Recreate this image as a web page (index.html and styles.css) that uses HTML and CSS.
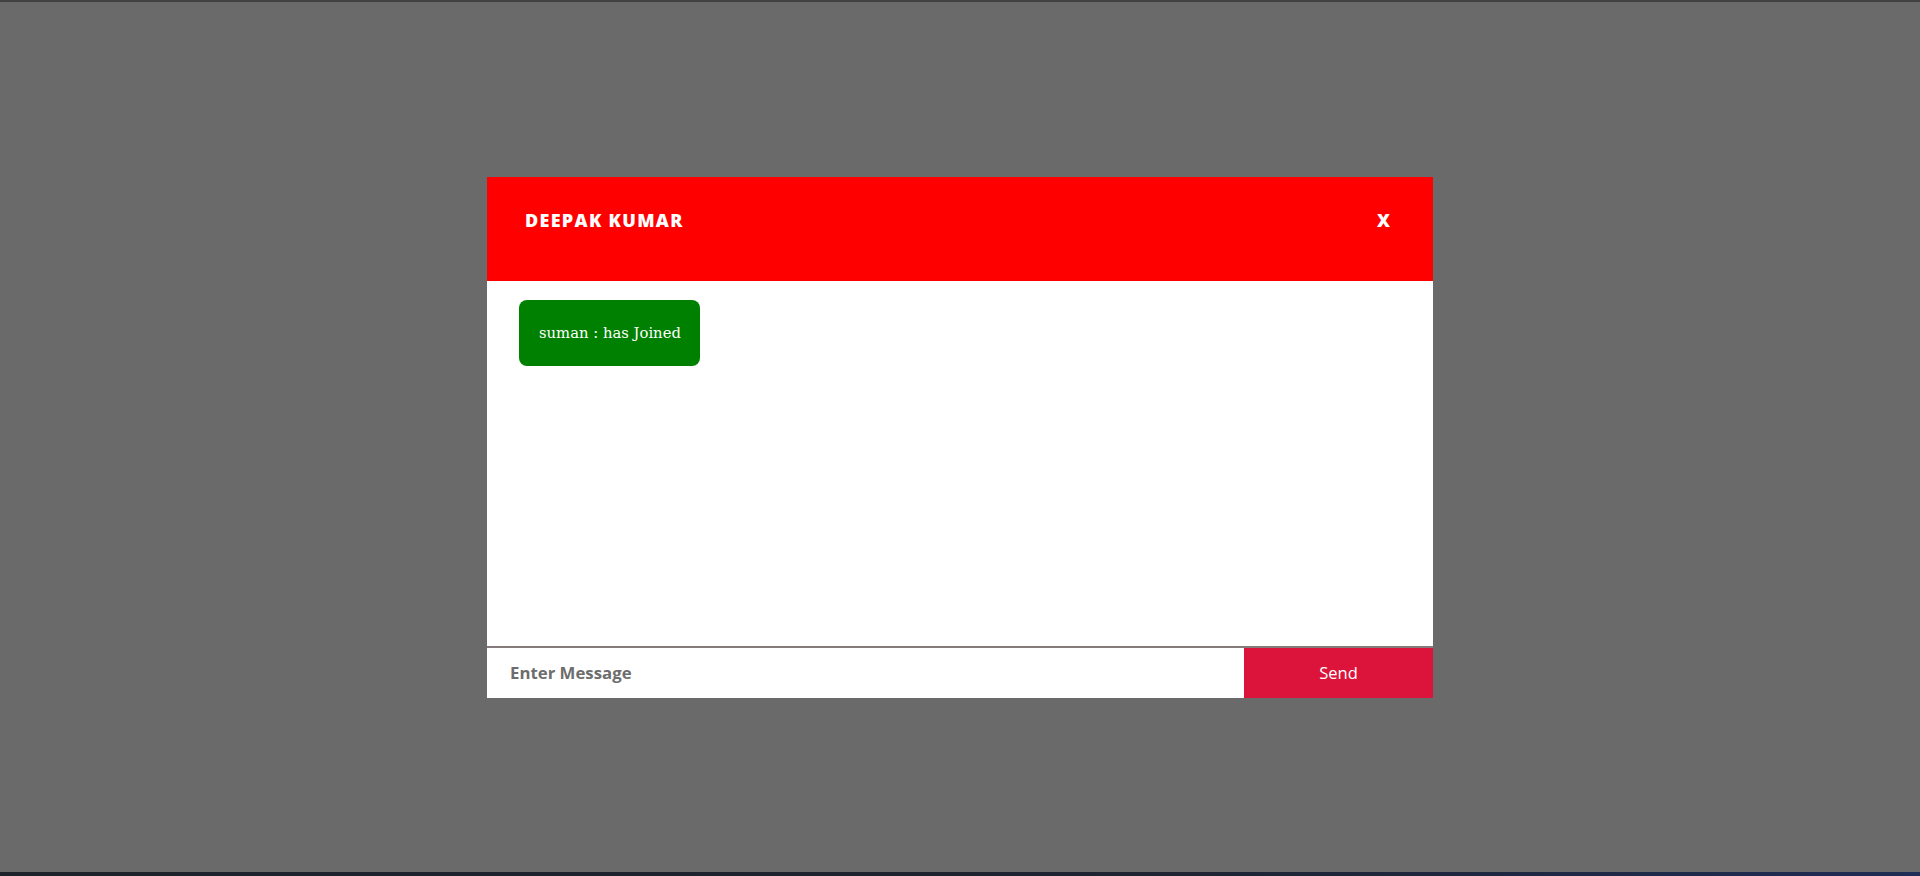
FILE: index.html
```html
<!DOCTYPE html>
<html>
<head>
<meta charset="utf-8">
<link rel="stylesheet" href="styles.css">
</head>
<body>
<div class="topbar"></div>
<main class="overlay">
  <section class="chat">
    <header class="chat-head">
      <span class="chat-title">Deepak Kumar</span>
      <span class="chat-close">X</span>
    </header>
    <div class="chat-body">
      <div class="msg">suman : has Joined</div>
    </div>
    <form class="chat-form">
      <input class="chat-input" type="text" placeholder="Enter Message">
      <button class="chat-send" type="button">Send</button>
    </form>
  </section>
</main>
<div class="taskbar"></div>
</body>
</html>
```
FILE: styles.css
```css
html, body {
  margin: 0;
  height: 100%;
}
body {
  display: flex;
  flex-direction: column;
  background: #6a6a6a;
  font-family: "Open Sans", "Noto Sans", sans-serif;
}
.topbar {
  height: 2px;
  background: #414141;
}
.taskbar {
  height: 4px;
  background: linear-gradient(90deg, #1d222b 0%, #1e2431 60%, #1f2c55 100%);
}
.overlay {
  flex: 1;
  display: flex;
  align-items: center;
  justify-content: center;
}
.chat {
  width: 946px;
  background: #fff;
  display: flex;
  flex-direction: column;
}
.chat-head {
  height: 104px;
  box-sizing: border-box;
  background: #ff0000;
  display: flex;
  align-items: flex-start;
  justify-content: space-between;
  padding: 31px 43px 0 38px;
  color: #fff;
  font-weight: 800;
  font-size: 18px;
  line-height: 24px;
  letter-spacing: 1.3px;
}
.chat-title {
  text-transform: uppercase;
}
.chat-close {
  letter-spacing: 0;
}
.chat-body {
  padding: 19px 32px;
  border-bottom: 2px solid #857b7b;
  height: 327px;
  display: flex;
  align-items: flex-start;
}
.msg {
  background: #008000;
  color: #fff;
  border-radius: 8px;
  padding: 0 19px 0 20px;
  height: 66px;
  display: flex;
  align-items: center;
  font-family: "DejaVu Serif", "Liberation Serif", serif;
  font-size: 14.8px;
}
.chat-form {
  display: flex;
  height: 50px;
  margin: 0;
}
.chat-input {
  flex: 1;
  border: none;
  outline: none;
  padding: 0 0 0 23px;
  font-family: "Open Sans", "Noto Sans", sans-serif;
  font-size: 16.8px;
  font-weight: 700;
  color: #333;
  background: #fff;
}
.chat-input::placeholder {
  color: #6d6d6d;
  opacity: 1;
}
.chat-send {
  width: 189px;
  border: none;
  background: #dc143c;
  color: #fff;
  font-family: "Open Sans", "Noto Sans", sans-serif;
  font-size: 16.5px;
  padding: 0;
}
```
